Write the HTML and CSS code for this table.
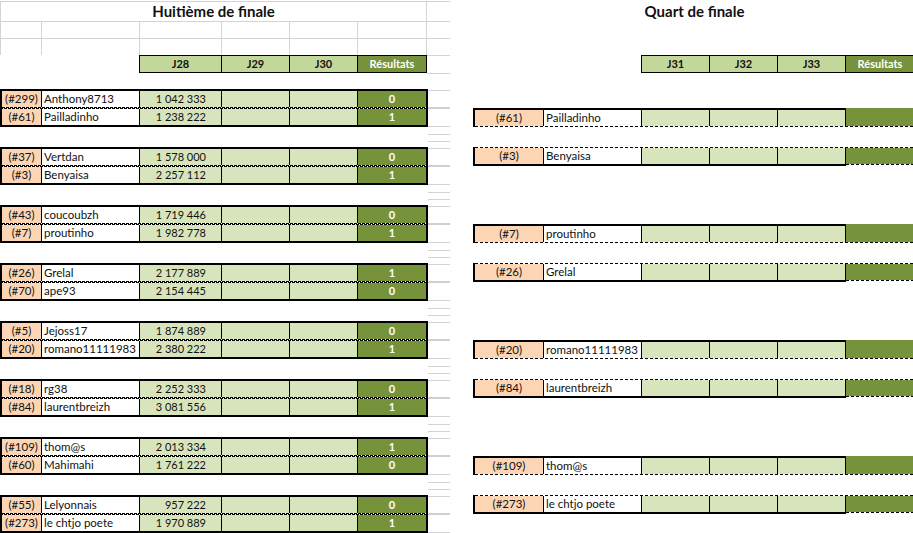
FILE: index.html
```html
<!DOCTYPE html>
<html lang="fr">
<head>
<meta charset="utf-8">
<title>Tableau</title>
<link rel="stylesheet" href="styles.css">
</head>
<body>
<div class="page">
  <section class="left">
    <div class="grow r1"><div class="gc title">Huitième de finale</div><div class="gc g"></div></div>
    <div class="grow r2"><div class="gc a"></div><div class="gc b"></div><div class="gc c"></div><div class="gc d"></div><div class="gc e"></div><div class="gc f"></div><div class="gc g"></div></div>
    <div class="grow r2"><div class="gc a"></div><div class="gc b"></div><div class="gc c"></div><div class="gc d"></div><div class="gc e"></div><div class="gc f"></div><div class="gc g"></div></div>
    <div class="hrow">
      <div class="hspacer"></div>
      <div class="hdr lhdr"><div class="h">J28</div><div class="h">J29</div><div class="h">J30</div><div class="h res">Résultats</div></div>
      <div class="hg"></div>
    </div>
    <div class="brow"><div class="bspacer"></div><div class="bg"></div></div>
    <div class="groups">
      <div class="match">
        <div class="box">
          <div class="row"><div class="seed">(#299)</div><div class="name">Anthony8713</div><div class="score">1 042 333</div><div class="j"></div><div class="j"></div><div class="res">0</div></div>
          <div class="dash"></div>
          <div class="row"><div class="seed">(#61)</div><div class="name">Pailladinho</div><div class="score">1 238 222</div><div class="j"></div><div class="j"></div><div class="res">1</div></div>
        </div>
        <div class="gcol"></div>
      </div>
      <div class="match">
        <div class="box">
          <div class="row"><div class="seed">(#37)</div><div class="name">Vertdan</div><div class="score">1 578 000</div><div class="j"></div><div class="j"></div><div class="res">0</div></div>
          <div class="dash"></div>
          <div class="row"><div class="seed">(#3)</div><div class="name">Benyaisa</div><div class="score">2 257 112</div><div class="j"></div><div class="j"></div><div class="res">1</div></div>
        </div>
        <div class="gcol"></div>
      </div>
      <div class="match">
        <div class="box">
          <div class="row"><div class="seed">(#43)</div><div class="name">coucoubzh</div><div class="score">1 719 446</div><div class="j"></div><div class="j"></div><div class="res">0</div></div>
          <div class="dash"></div>
          <div class="row"><div class="seed">(#7)</div><div class="name">proutinho</div><div class="score">1 982 778</div><div class="j"></div><div class="j"></div><div class="res">1</div></div>
        </div>
        <div class="gcol"></div>
      </div>
      <div class="match">
        <div class="box">
          <div class="row"><div class="seed">(#26)</div><div class="name">Grelal</div><div class="score">2 177 889</div><div class="j"></div><div class="j"></div><div class="res">1</div></div>
          <div class="dash"></div>
          <div class="row"><div class="seed">(#70)</div><div class="name">ape93</div><div class="score">2 154 445</div><div class="j"></div><div class="j"></div><div class="res">0</div></div>
        </div>
        <div class="gcol"></div>
      </div>
      <div class="match">
        <div class="box">
          <div class="row"><div class="seed">(#5)</div><div class="name">Jejoss17</div><div class="score">1 874 889</div><div class="j"></div><div class="j"></div><div class="res">0</div></div>
          <div class="dash"></div>
          <div class="row"><div class="seed">(#20)</div><div class="name">romano11111983</div><div class="score">2 380 222</div><div class="j"></div><div class="j"></div><div class="res">1</div></div>
        </div>
        <div class="gcol"></div>
      </div>
      <div class="match">
        <div class="box">
          <div class="row"><div class="seed">(#18)</div><div class="name">rg38</div><div class="score">2 252 333</div><div class="j"></div><div class="j"></div><div class="res">0</div></div>
          <div class="dash"></div>
          <div class="row"><div class="seed">(#84)</div><div class="name">laurentbreizh</div><div class="score">3 081 556</div><div class="j"></div><div class="j"></div><div class="res">1</div></div>
        </div>
        <div class="gcol"></div>
      </div>
      <div class="match">
        <div class="box">
          <div class="row"><div class="seed">(#109)</div><div class="name">thom@s</div><div class="score">2 013 334</div><div class="j"></div><div class="j"></div><div class="res">1</div></div>
          <div class="dash"></div>
          <div class="row"><div class="seed">(#60)</div><div class="name">Mahimahi</div><div class="score">1 761 222</div><div class="j"></div><div class="j"></div><div class="res">0</div></div>
        </div>
        <div class="gcol"></div>
      </div>
      <div class="match">
        <div class="box">
          <div class="row"><div class="seed">(#55)</div><div class="name">Lelyonnais</div><div class="score">957 222</div><div class="j"></div><div class="j"></div><div class="res">0</div></div>
          <div class="dash"></div>
          <div class="row"><div class="seed">(#273)</div><div class="name">le chtjo poete</div><div class="score">1 970 889</div><div class="j"></div><div class="j"></div><div class="res">1</div></div>
        </div>
        <div class="gcol"></div>
      </div>
    </div>
  </section>

  <section class="right">
    <div class="qtitle">Quart de finale</div>
    <div class="qhrow">
      <div class="hdr rhdr"><div class="h">J31</div><div class="h">J32</div><div class="h">J33</div><div class="h res">Résultats</div></div>
    </div>
    <div class="pairs">
      <div class="pair">
        <div class="qrow q1"><div class="qcells"><div class="seed">(#61)</div><div class="name">Pailladinho</div><div class="j"></div><div class="j"></div><div class="j"></div><div class="res"></div></div><div class="qdash"></div></div>
        <div class="qrow q2"><div class="qdash"></div><div class="qcells"><div class="seed">(#3)</div><div class="name">Benyaisa</div><div class="j"></div><div class="j"></div><div class="j"></div><div class="res"></div></div></div>
      </div>
      <div class="pair">
        <div class="qrow q1"><div class="qcells"><div class="seed">(#7)</div><div class="name">proutinho</div><div class="j"></div><div class="j"></div><div class="j"></div><div class="res"></div></div><div class="qdash"></div></div>
        <div class="qrow q2"><div class="qdash"></div><div class="qcells"><div class="seed">(#26)</div><div class="name">Grelal</div><div class="j"></div><div class="j"></div><div class="j"></div><div class="res"></div></div></div>
      </div>
      <div class="pair">
        <div class="qrow q1"><div class="qcells"><div class="seed">(#20)</div><div class="name">romano11111983</div><div class="j"></div><div class="j"></div><div class="j"></div><div class="res"></div></div><div class="qdash"></div></div>
        <div class="qrow q2"><div class="qdash"></div><div class="qcells"><div class="seed">(#84)</div><div class="name">laurentbreizh</div><div class="j"></div><div class="j"></div><div class="j"></div><div class="res"></div></div></div>
      </div>
      <div class="pair">
        <div class="qrow q1"><div class="qcells"><div class="seed">(#109)</div><div class="name">thom@s</div><div class="j"></div><div class="j"></div><div class="j"></div><div class="res"></div></div><div class="qdash"></div></div>
        <div class="qrow q2"><div class="qdash"></div><div class="qcells"><div class="seed">(#273)</div><div class="name">le chtjo poete</div><div class="j"></div><div class="j"></div><div class="j"></div><div class="res"></div></div></div>
      </div>
    </div>
  </section>
</div>
</body>
</html>
```
FILE: styles.css
```css
* { box-sizing: border-box; }
html, body { margin: 0; padding: 0; background: #fff; }
body {
  font-family: Lato, "Liberation Sans", sans-serif;
  font-size: 11px;
  color: #111;
  width: 913px;
  height: 533px;
  overflow: hidden;
}
.page { display: flex; width: 913px; height: 533px; overflow: hidden; }

/* ---------- left block ---------- */
.left { width: 450px; flex: none; padding-top: 1px; }
.grow { display: flex; }
.r1 { height: 20px; }
.r2 { height: 17px; }
.gc { border-top: 1px solid #d4d4d4; border-left: 1px solid #d4d4d4; height: 100%; }
.gc.title {
  width: 426px;
  font-weight: 700;
  font-size: 15px;
  text-align: center;
  line-height: 19px;
  color: #111;
}
.gc.a { width: 41px; }
.gc.b { width: 98px; }
.gc.c { width: 82px; }
.gc.d { width: 68px; }
.gc.e { width: 68px; }
.gc.f { width: 69px; }
.gc.g { width: 24px; }

.hrow { display: flex; height: 18px; }
.hspacer { width: 139px; }
.hg { width: 23px; border-top: 1px solid #d4d4d4; }
.hdr {
  display: grid;
  background: #000;
  padding: 1px;
  column-gap: 1px;
  height: 18px;
}
.lhdr { width: 288px; grid-template-columns: 81px 67px 67px 68px; }
.h {
  background: #c4d79b;
  font-weight: 700;
  text-align: center;
  line-height: 16px;
  color: #111;
}
.h.res { background: #76933c; color: #fff; }

.brow { display: flex; height: 16px; }
.bspacer { width: 427px; }
.bg { width: 23px; border-top: 1px solid #d4d4d4; }

.match { display: flex; align-items: flex-start; height: 58px; }
.box {
  width: 428px;
  height: 38px;
  border: 2px solid #000;
  background: #000;
}
.row {
  display: grid;
  grid-template-columns: 39px 97px 81px 67px 67px 68px;
  column-gap: 1px;
  height: 16px;
  line-height: 16px;
}
.dash {
  height: 2px;
  background:
    repeating-linear-gradient(90deg, #000 0 3px, #fff 3px 4px) 0 0 / 100% 1px no-repeat,
    repeating-linear-gradient(90deg, #000 0 1px, #fff 1px 2px, #000 2px 4px) 0 1px / 100% 1px no-repeat;
}
.seed { background: #fcd5b4; text-align: center; white-space: nowrap; font-size: 11.5px; }
.name { background: #fff; padding-left: 2px; white-space: nowrap; overflow: hidden; font-size: 11.5px; }
.score { background: #d8e4bc; text-align: right; padding-right: 15px; white-space: nowrap; }
.j { background: #d8e4bc; }
.res { background: #76933c; color: #fff; font-weight: 700; text-align: center; }

.gcol {
  width: 22px;
  height: 58px;
  background:
    linear-gradient(#d4d4d4, #d4d4d4) 0 1px / 100% 1px no-repeat,
    linear-gradient(#d0d0d0, #d0d0d0) 0 18px / 100% 2px no-repeat,
    linear-gradient(#d4d4d4, #d4d4d4) 0 37px / 100% 1px no-repeat,
    linear-gradient(#d4d4d4, #d4d4d4) 0 45px / 100% 1px no-repeat,
    linear-gradient(#d4d4d4, #d4d4d4) 0 52px / 100% 1px no-repeat;
}

/* ---------- right block ---------- */
.right { width: 463px; flex: none; }
.qtitle {
  height: 21px;
  padding: 1px 0 0 26px;
  font-weight: 700;
  font-size: 15px;
  line-height: 21px;
  text-align: center;
  color: #111;
}
.qhrow { margin-top: 34px; padding-left: 191px; }
.rhdr { width: 274px; grid-template-columns: 67px 67px 67px 68px; }

.pairs { margin-top: 35px; display: flex; flex-direction: column; gap: 58px; }
.pair { display: flex; flex-direction: column; gap: 20px; }
.qrow { margin-left: 23px; border-left: 2px solid #000; height: 19px; }
.qcells {
  display: grid;
  grid-template-columns: 68px 97px 67px 67px 67px 68px;
  column-gap: 1px;
  background: #000;
  height: 18px;
  line-height: 16px;
}
.qdash {
  height: 1px;
  background: repeating-linear-gradient(90deg, #000 0 3px, #fff 3px 5px);
}
.q1 .qcells > div:not(.res) { border-top: 2px solid #000; }
.q2 .qcells > div:not(.res) { border-bottom: 2px solid #000; }
.q2 .qcells .res {
  background:
    repeating-linear-gradient(90deg, #000 0 3px, #fff 3px 5px) 0 16px / 100% 1px no-repeat,
    linear-gradient(#fff, #fff) 0 17px / 100% 1px no-repeat,
    #76933c;
}
.q1 .qcells .res { line-height: 18px; }
```
